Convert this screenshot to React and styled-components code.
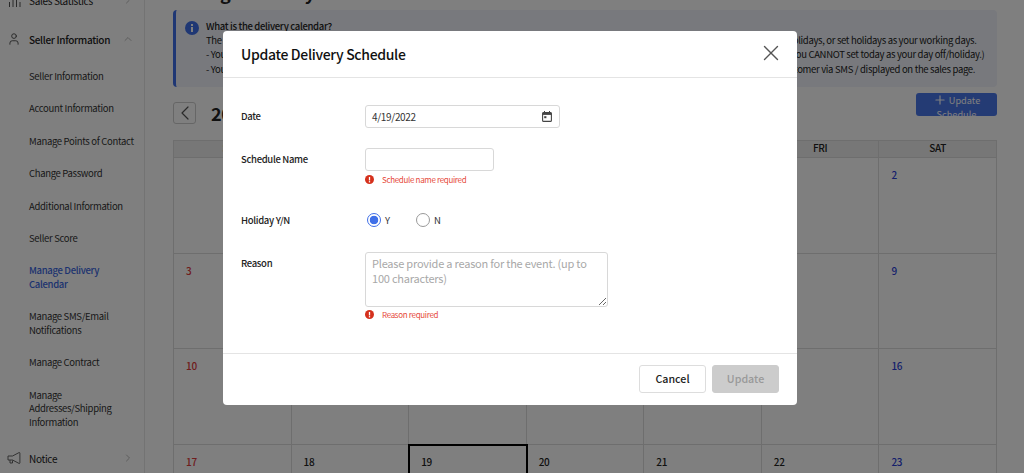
import styled, { createGlobalStyle } from "styled-components";
import { User, ChevronUp, ChevronRight, ChevronLeft, X, Plus } from "lucide-react";

const GlobalStyle = createGlobalStyle`
  html, body {
    margin: 0;
    height: 100%;
    overflow: hidden;
    background: #fff;
    font-family: "Noto Sans CJK KR", "Noto Sans", sans-serif;
    letter-spacing: -0.02em;
    color: #222;
  }
  * {
    box-sizing: border-box;
  }
`;

const Page = styled.div`
  display: flex;
  width: 1024px;
  height: 473px;
  overflow: hidden;
`;

const Sidebar = styled.aside`
  flex: 0 0 145px;
  height: 473px;
  border-right: 1px solid #e6e6e6;
  padding: 0 8px;
  overflow: hidden;
`;

const NavHead = styled.div`
  display: flex;
  align-items: center;
  height: 14px;
  margin-top: ${(p) => p.$top}px;
  font-size: 10px;
  font-weight: ${(p) => (p.$bold ? 500 : 400)};
  white-space: nowrap;
  svg:first-child {
    flex: 0 0 14px;
    margin-right: 8px;
    margin-left: -1px;
  }
  svg:last-child {
    margin-left: auto;
    margin-right: 2px;
    color: #bbb;
  }
`;

const SubNav = styled.ul`
  list-style: none;
  margin: 24px 0 0;
  padding: 0 0 0 21px;
  display: flex;
  flex-direction: column;
  gap: 18.9px;
`;

const SubItem = styled.li`
  font-size: 9.5px;
  line-height: 13.5px;
  color: ${(p) => (p.$active ? "#3a66e0" : "#333")};
  font-weight: ${(p) => (p.$active ? 500 : 400)};
`;

const Main = styled.main`
  flex: 1;
  min-width: 0;
  padding: 0 27px 0 28px;
`;

const Heading = styled.h1`
  margin: -20px 0 6px;
  height: 24px;
  font-size: 18px;
  line-height: 24px;
  font-weight: 700;
  white-space: nowrap;
`;

const Alert = styled.div`
  display: flex;
  gap: 7px;
  height: 77px;
  padding: 9px 0 0 9px;
  background: #f0f3fa;
  border-left: 3px solid #3f6fe8;
  border-radius: 4px;
  font-size: 9.5px;
  line-height: 14.2px;
  white-space: nowrap;
  overflow: hidden;
  svg {
    flex: 0 0 14px;
    margin-top: 2px;
  }
  b {
    display: block;
    font-weight: 500;
  }
`;

const Toolbar = styled.div`
  display: flex;
  justify-content: space-between;
  align-items: flex-start;
  height: 47px;
  margin-top: 6px;
`;

const MonthNav = styled.div`
  display: flex;
  align-items: center;
  gap: 15px;
  margin-top: 7px;
  font-size: 18px;
  font-weight: 700;
`;

const BackButton = styled.button`
  display: flex;
  align-items: center;
  justify-content: center;
  width: 23px;
  height: 22px;
  padding: 0;
  background: #fff;
  border: 1px solid #ccc;
  border-radius: 3px;
  color: #555;
  svg {
    flex: none;
  }
`;

const AddButton = styled.button`
  display: block;
  width: 81px;
  height: 23px;
  padding: 0 8px;
  overflow: hidden;
  background: #3f6fe8;
  border: 0;
  border-radius: 3px;
  color: #fff;
  font-family: inherit;
  font-size: 9.2px;
  line-height: 14px;
  opacity: 0.95;
  svg {
    vertical-align: -3px;
    margin-right: 2px;
  }
`;

const Calendar = styled.div`
  display: grid;
  grid-template-columns: repeat(7, 1fr);
  grid-template-rows: 17px repeat(4, 95.5px);
  border-left: 1px solid #ddd;
  border-top: 1px solid #ddd;
`;

const DayName = styled.div`
  background: #eee;
  border-right: 1px solid #ddd;
  border-bottom: 1px solid #ddd;
  font-size: 10px;
  line-height: 14px;
  font-weight: 500;
  text-align: center;
`;

const Cell = styled.div`
  padding: 10px 0 0 12px;
  border-right: 1px solid #ddd;
  border-bottom: 1px solid #ddd;
  font-size: 10px;
  line-height: 14px;
  font-weight: 500;
  color: ${(p) => (p.$tone === "sun" ? "#e03a3a" : p.$tone === "sat" ? "#2a3fd8" : "#222")};
  outline: ${(p) => (p.$today ? "2px solid #000" : "none")};
  outline-offset: -1px;
`;

const Overlay = styled.div`
  position: fixed;
  inset: 0;
  padding: 31px 0 0 223px;
  background: rgba(0, 0, 0, 0.5);
`;

const Modal = styled.div`
  width: 574px;
  background: #fff;
  border-radius: 4px;
`;

const ModalHead = styled.header`
  display: flex;
  align-items: center;
  justify-content: space-between;
  height: 47px;
  padding: 0 13px 0 18px;
  border-bottom: 1px solid #e4e4e4;
  h2 {
    margin: 0;
    font-size: 14px;
    font-weight: 500;
    color: #111;
  }
  svg {
    color: #555;
    margin-top: -2px;
  }
`;

const ModalBody = styled.div`
  display: flex;
  flex-direction: column;
  gap: 20px;
  padding: 27px 18px 31px;
  border-bottom: 1px solid #e4e4e4;
`;

const Row = styled.div`
  display: grid;
  grid-template-columns: 124px 1fr;
  margin-top: ${(p) => p.$shift || 0}px;
`;

const Label = styled.label`
  font-size: 9.5px;
  line-height: 23px;
  font-weight: 500;
  color: #222;
`;

const Field = styled.div`
  display: flex;
  flex-direction: column;
  align-items: flex-start;
`;

const DateBox = styled.div`
  display: flex;
  align-items: center;
  justify-content: space-between;
  width: 195px;
  height: 23px;
  padding: 0 7px 0 6px;
  border: 1px solid #d8d8d8;
  border-radius: 3px;
  font-size: 10px;
  color: #333;
`;

const TextInput = styled.input`
  display: block;
  width: 129px;
  height: 23px;
  padding: 0 7px;
  border: 1px solid #d8d8d8;
  border-radius: 3px;
  outline: none;
`;

const TextArea = styled.textarea`
  display: block;
  width: 243px;
  height: 55px;
  margin: 0;
  padding: 3px 6px;
  border: 1px solid #d8d8d8;
  border-radius: 3px;
  outline: none;
  font-family: inherit;
  font-size: 11px;
  line-height: 15px;
  letter-spacing: -0.02em;
  &::placeholder {
    color: #a8a8a8;
  }
`;

const ErrorText = styled.div`
  display: flex;
  align-items: center;
  gap: 8px;
  height: 14px;
  margin-top: 1px;
  font-size: 8px;
  color: #e64a3a;
`;

const RadioGroup = styled.div`
  display: flex;
  align-items: center;
  height: 23px;
  padding-left: 2px;
`;

const RadioOption = styled.span`
  display: flex;
  align-items: center;
  gap: 4px;
  width: 49px;
  font-size: 9.5px;
  color: #333;
`;

const RadioDot = styled.i`
  display: block;
  width: 14px;
  height: 14px;
  border-radius: 50%;
  border: ${(p) => (p.$on ? "1.5px solid #3f6fe8" : "1.5px solid #999")};
  background: ${(p) => (p.$on ? "radial-gradient(circle, #3f6fe8 0 4px, #fff 4.6px)" : "#fff")};
`;

const ModalFoot = styled.footer`
  display: flex;
  justify-content: flex-end;
  gap: 6px;
  padding: 11px 18px 12px;
`;

const FootButton = styled.button`
  width: 67px;
  height: 28px;
  padding: 0 0 1px;
  border-radius: 3px;
  border: 1px solid ${(p) => (p.disabled ? "#ccc" : "#ddd")};
  background: ${(p) => (p.disabled ? "#ccc" : "#fff")};
  color: ${(p) => (p.disabled ? "#999" : "#222")};
  font-family: inherit;
  font-size: 10.7px;
  font-weight: 500;
`;

const InfoIcon = ({ size, color }) => (
  <svg width={size} height={size} viewBox="0 0 14 14">
    <circle cx="7" cy="7" r="7" fill={color} />
    <rect x="6" y="6" width="2" height="5" fill="#fff" />
    <rect x="6" y="3" width="2" height="2" fill="#fff" />
  </svg>
);

const ErrorIcon = () => (
  <svg width="9" height="9" viewBox="0 0 14 14">
    <circle cx="7" cy="7" r="7" fill="#d5301c" />
    <rect x="6" y="3" width="2" height="5.5" fill="#fff" />
    <rect x="6" y="9.5" width="2" height="2" fill="#fff" />
  </svg>
);

const CalendarIcon = () => (
  <svg width="10" height="11" viewBox="0 0 10 11" fill="none">
    <path d="M2.5 0v1.5M7.5 0v1.5" stroke="#444" />
    <rect x="0.6" y="1.5" width="8.8" height="8.9" rx="1" stroke="#444" strokeWidth="1.1" />
    <rect x="0.6" y="1.5" width="8.8" height="2.4" fill="#444" />
    <rect x="2.2" y="5.2" width="2.2" height="2" fill="#444" />
  </svg>
);

const BarsIcon = () => (
  <svg width="14" height="14" viewBox="0 0 14 14" fill="none" stroke="#555">
    <path d="M2.5 14V9M6 14V6M9.5 14V1M13 14V9" />
  </svg>
);

const HornIcon = () => (
  <svg width="14" height="14" viewBox="0 0 14 14" fill="none" stroke="#555" strokeWidth="0.9">
    <path d="M1 5h4.5L12 1.6c.6-.2.9 0 .9.6v9.6c0 .6-.4.8-.9.6L5.5 9H1z" />
    <path d="M3 9v3h2.5V9.4" />
  </svg>
);

const weeks = [
  ["", "", "", "", "", "1", "2"],
  ["3", "4", "5", "6", "7", "8", "9"],
  ["10", "11", "12", "13", "14", "15", "16"],
  ["17", "18", "19", "20", "21", "22", "23"],
];

const days = ["SUN", "MON", "TUE", "WED", "THU", "FRI", "SAT"];

const subItems = [
  "Seller Information",
  "Account Information",
  "Manage Points of Contact",
  "Change Password",
  "Additional Information",
  "Seller Score",
  "Manage Delivery Calendar",
  "Manage SMS/Email Notifications",
  "Manage Contract",
  "Manage Addresses/Shipping Information",
];

const App = () => {
  return (
    <>
      <GlobalStyle />
      <Page>
        <Sidebar>
          <NavHead $top={-7}>
            <BarsIcon />
            Sales Statistics
            <ChevronRight size={12} />
          </NavHead>
          <NavHead $top={25} $bold>
            <User size={16} strokeWidth={1.5} color="#444" />
            Seller Information
            <ChevronUp size={12} />
          </NavHead>
          <SubNav>
            {subItems.map((item) => (
              <SubItem key={item} $active={item === "Manage Delivery Calendar"}>
                {item}
              </SubItem>
            ))}
          </SubNav>
          <NavHead $top={22}>
            <HornIcon />
            Notice
            <ChevronRight size={12} />
          </NavHead>
        </Sidebar>
        <Main>
          <Heading>Manage Delivery Calendar</Heading>
          <Alert>
            <InfoIcon size={14} color="#3f6fe8" />
            <div>
              <b>What is the delivery calendar?</b>
              The delivery calendar shows your shipping schedule at one glance. On this page you can freely set any of your working days as your day offs or holidays, or set holidays as your working days.
              <br />
              - You can register a day off or holiday starting from tomorrow and adjust your shipping date accordingly for any order you receive from now on. (You CANNOT set today as your day off/holiday.)
              <br />
              - Your registered schedule and the updated delivery date for each of your products and every order placed in your store will be notified to the customer via SMS / displayed on the sales page.
            </div>
          </Alert>
          <Toolbar>
            <MonthNav>
              <BackButton>
                <ChevronLeft size={24} strokeWidth={1.2} />
              </BackButton>
              2022. 04
            </MonthNav>
            <AddButton>
              <Plus size={14} />
              Update Schedule
            </AddButton>
          </Toolbar>
          <Calendar>
            {days.map((d) => (
              <DayName key={d}>{d}</DayName>
            ))}
            {weeks.flat().map((n, i) => (
              <Cell
                key={i}
                $tone={i % 7 === 0 ? "sun" : i % 7 === 6 ? "sat" : ""}
                $today={n === "19"}
              >
                {n}
              </Cell>
            ))}
          </Calendar>
        </Main>
      </Page>
      <Overlay>
        <Modal>
          <ModalHead>
            <h2>Update Delivery Schedule</h2>
            <X size={26} strokeWidth={1.3} />
          </ModalHead>
          <ModalBody>
            <Row>
              <Label>Date</Label>
              <DateBox>
                4/19/2022
                <CalendarIcon />
              </DateBox>
            </Row>
            <Row>
              <Label>Schedule Name</Label>
              <Field>
                <TextInput />
                <ErrorText>
                  <ErrorIcon />
                  Schedule name required
                </ErrorText>
              </Field>
            </Row>
            <Row $shift={2.5}>
              <Label>Holiday Y/N</Label>
              <RadioGroup>
                <RadioOption>
                  <RadioDot $on />Y
                </RadioOption>
                <RadioOption>
                  <RadioDot />N
                </RadioOption>
              </RadioGroup>
            </Row>
            <Row>
              <Label>Reason</Label>
              <Field>
                <TextArea placeholder="Please provide a reason for the event. (up to 100 characters)" />
                <ErrorText>
                  <ErrorIcon />
                  Reason required
                </ErrorText>
              </Field>
            </Row>
          </ModalBody>
          <ModalFoot>
            <FootButton>Cancel</FootButton>
            <FootButton disabled>Update</FootButton>
          </ModalFoot>
        </Modal>
      </Overlay>
    </>
  );
};

export default App;
